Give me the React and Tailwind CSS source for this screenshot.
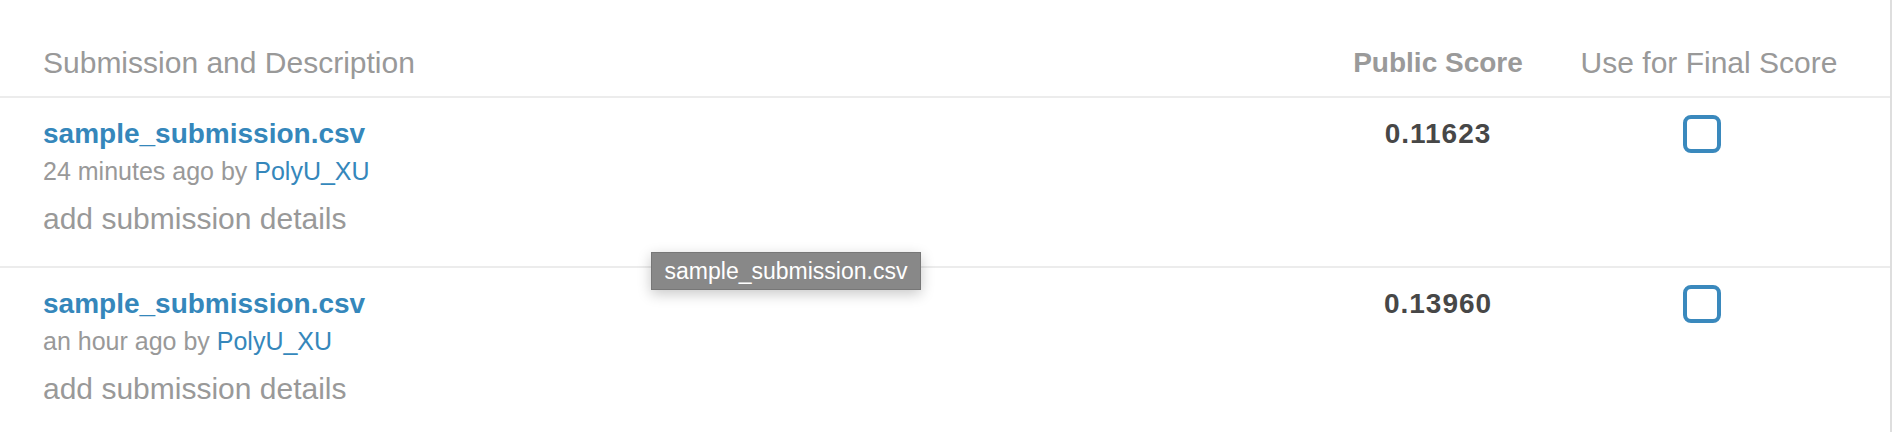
import React from 'react';

const submissions = [
  { file: 'sample_submission.csv', when: '24 minutes ago', user: 'PolyU_XU', score: '0.11623' },
  { file: 'sample_submission.csv', when: 'an hour ago', user: 'PolyU_XU', score: '0.13960' },
];

const SubmissionRow = ({ item }) => (
  <div className="flex h-[170px] border-b-2 border-[#ececec]">
    <div className="flex-1 pl-[43px] pt-[22px]">
      <a className="block text-[28px] leading-[28px] font-bold text-[#3587bb] cursor-pointer">{item.file}</a>
      <div className="mt-[11px] text-[25px] leading-[25px] text-[#999]">
        {item.when} by <span className="text-[#3587bb]">{item.user}</span>
      </div>
      <div className="mt-[20px] text-[30px] leading-[30px] text-[#999]">add submission details</div>
    </div>
    <div className="w-[180px] pt-[22px] text-center text-[28px] leading-[28px] tracking-[1px] font-bold text-[#474747]">{item.score}</div>
    <div className="w-[362px] flex justify-center pr-[14px] pt-[17px]">
      <div className="w-[38px] h-[38px] border-4 border-[#3a89bd] rounded-[8px] bg-white"></div>
    </div>
  </div>
);

export default function App() {
  return (
    <div className="relative w-full h-[432px] overflow-hidden bg-white" style={{ fontFamily: '"Liberation Sans", Arial, sans-serif' }}>
      <div className="w-[1892px] h-full border-r-2 border-[#dedede]">
        {/* header */}
        <div className="flex h-[98px] border-b-2 border-[#ececec] pt-[48px] text-[30px] leading-[30px] text-[#999] whitespace-nowrap">
          <div className="flex-1 pl-[43px]">Submission and Description</div>
          <div className="w-[180px] flex justify-center text-[28px] font-bold text-[#9a9a9a]">Public Score</div>
          <div className="w-[362px] flex justify-center">Use for Final Score</div>
        </div>

        {submissions.map((s, i) => (
          <SubmissionRow key={i} item={s} />
        ))}
      </div>

      {/* hover tooltip */}
      <div className="absolute left-[651px] top-[252px] w-[270px] h-[38px] flex items-center justify-center bg-[#888] border border-[#777] text-white text-[23px] shadow-[0_4px_14px_rgba(0,0,0,0.22)]">
        sample_submission.csv
      </div>
    </div>
  );
}
